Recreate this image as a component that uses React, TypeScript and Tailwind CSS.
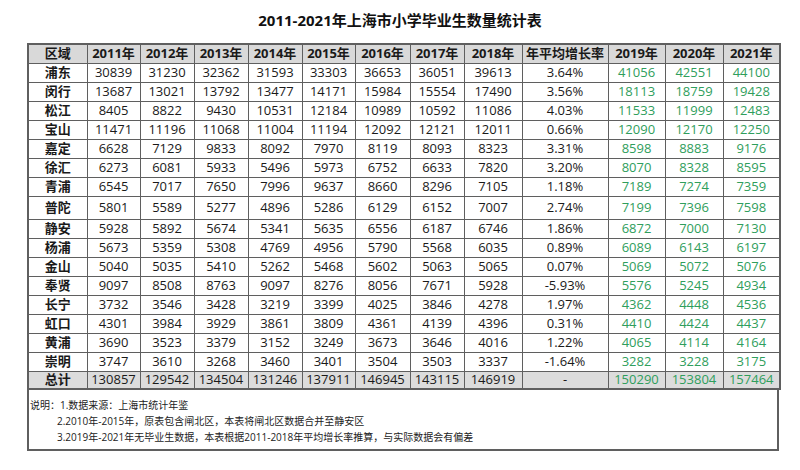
const years = ["2011年", "2012年", "2013年", "2014年", "2015年", "2016年", "2017年", "2018年"];
const future = ["2019年", "2020年", "2021年"];
const widths = [59, 53, 54, 54, 54, 53, 55, 54, 58, 86, 57, 58, 57];

type Row = { name: string; data: string[]; rate: string; est: string[]; tall?: boolean };

const rows: Row[] = [
  { name: "浦东", data: ["30839", "31230", "32362", "31593", "33303", "36653", "36051", "39613"], rate: "3.64%", est: ["41056", "42551", "44100"] },
  { name: "闵行", data: ["13687", "13021", "13792", "13477", "14171", "15984", "15554", "17490"], rate: "3.56%", est: ["18113", "18759", "19428"] },
  { name: "松江", data: ["8405", "8822", "9430", "10531", "12184", "10989", "10592", "11086"], rate: "4.03%", est: ["11533", "11999", "12483"] },
  { name: "宝山", data: ["11471", "11196", "11068", "11004", "11194", "12092", "12121", "12011"], rate: "0.66%", est: ["12090", "12170", "12250"] },
  { name: "嘉定", data: ["6628", "7129", "9833", "8092", "7970", "8119", "8093", "8323"], rate: "3.31%", est: ["8598", "8883", "9176"] },
  { name: "徐汇", data: ["6273", "6081", "5933", "5496", "5973", "6752", "6633", "7820"], rate: "3.20%", est: ["8070", "8328", "8595"] },
  { name: "青浦", data: ["6545", "7017", "7650", "7996", "9637", "8660", "8296", "7105"], rate: "1.18%", est: ["7189", "7274", "7359"] },
  { name: "普陀", data: ["5801", "5589", "5277", "4896", "5286", "6129", "6152", "7007"], rate: "2.74%", est: ["7199", "7396", "7598"], tall: true },
  { name: "静安", data: ["5928", "5892", "5674", "5341", "5635", "6556", "6187", "6746"], rate: "1.86%", est: ["6872", "7000", "7130"] },
  { name: "杨浦", data: ["5673", "5359", "5308", "4769", "4956", "5790", "5568", "6035"], rate: "0.89%", est: ["6089", "6143", "6197"] },
  { name: "金山", data: ["5040", "5035", "5410", "5262", "5468", "5602", "5063", "5065"], rate: "0.07%", est: ["5069", "5072", "5076"] },
  { name: "奉贤", data: ["9097", "8508", "8763", "9097", "8276", "8056", "7671", "5928"], rate: "-5.93%", est: ["5576", "5245", "4934"] },
  { name: "长宁", data: ["3732", "3546", "3428", "3219", "3399", "4025", "3846", "4278"], rate: "1.97%", est: ["4362", "4448", "4536"] },
  { name: "虹口", data: ["4301", "3984", "3929", "3861", "3809", "4361", "4139", "4396"], rate: "0.31%", est: ["4410", "4424", "4437"] },
  { name: "黄浦", data: ["3690", "3523", "3379", "3152", "3249", "3673", "3646", "4016"], rate: "1.22%", est: ["4065", "4114", "4164"] },
  { name: "崇明", data: ["3747", "3610", "3268", "3460", "3401", "3504", "3503", "3337"], rate: "-1.64%", est: ["3282", "3228", "3175"] },
];

const totals = ["130857", "129542", "134504", "131246", "137911", "146945", "143115", "146919"];
const totalEst = ["150290", "153804", "157464"];

const cell = "border border-[#5f5f5f] p-0 text-center align-middle";
const green = "text-[#2f9e5c]";

export default function App() {
  return (
    <div
      className="h-[470px] w-[800px] bg-white text-[#1a1a1a]"
      style={{ fontFamily: '"Open Sans", "Noto Sans CJK SC", sans-serif' }}
    >
      <h1 className="pt-[9px] text-center text-[15px] font-bold leading-[22px] text-[#111]">
        2011-2021年上海市小学毕业生数量统计表
      </h1>
      <div className="ml-[27px] mt-[12px] w-[752px]">
        <table className="w-[752px] table-fixed border-collapse border-2 border-[#5f5f5f] text-[13px] leading-none">
          <colgroup>
            {widths.map((w, i) => (
              <col key={i} style={{ width: w }} />
            ))}
          </colgroup>
          <thead>
            <tr className="h-[19px] bg-[#d9d9d9] font-bold">
              <th className={cell}>区域</th>
              {years.map((y) => (
                <th key={y} className={cell}>{y}</th>
              ))}
              <th className={cell}>年平均增长率</th>
              {future.map((y) => (
                <th key={y} className={cell}>{y}</th>
              ))}
            </tr>
          </thead>
          <tbody>
            {rows.map((r) => (
              <tr key={r.name} className={r.tall ? "h-[23px]" : "h-[19px]"}>
                <td className={`${cell} font-bold`}>{r.name}</td>
                {r.data.map((d, i) => (
                  <td key={i} className={cell}>{d}</td>
                ))}
                <td className={cell}>{r.rate}</td>
                {r.est.map((d, i) => (
                  <td key={i} className={`${cell} ${green}`}>{d}</td>
                ))}
              </tr>
            ))}
            <tr className="h-[18px] bg-[#dcdcdc]">
              <td className={`${cell} font-bold`}>总计</td>
              {totals.map((d, i) => (
                <td key={i} className={cell}>{d}</td>
              ))}
              <td className={cell}>-</td>
              {totalEst.map((d, i) => (
                <td key={i} className={`${cell} ${green}`}>{d}</td>
              ))}
            </tr>
          </tbody>
        </table>
        <div className="h-[61px] border-x-2 border-b-2 border-[#5f5f5f] pl-[1px] pt-[7px] text-[10px] leading-[16px] text-[#222]">
          <p>说明：1.数据来源：上海市统计年鉴</p>
          <p className="pl-[27px]">2.2010年-2015年，原表包含闸北区，本表将闸北区数据合并至静安区</p>
          <p className="pl-[27px]">3.2019年-2021年无毕业生数据，本表根据2011-2018年平均增长率推算，与实际数据会有偏差</p>
        </div>
      </div>
    </div>
  );
}
